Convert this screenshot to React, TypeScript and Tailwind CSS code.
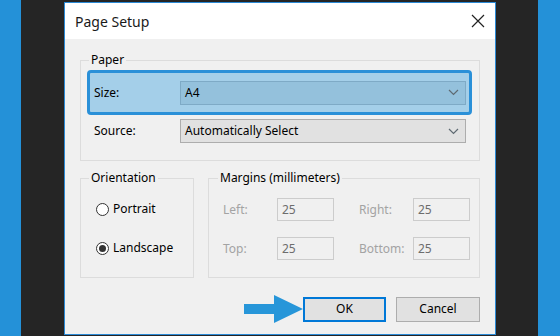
import { useState } from "react";

const font = { fontFamily: '"Noto Sans", "Open Sans", sans-serif' };

function Chevron() {
  return (
    <svg width="11" height="7" viewBox="0 0 11 7" className="mr-[6px]">
      <path d="M1 1l4.5 4.5L10 1" fill="none" stroke="#5f6a72" strokeWidth="1.2" />
    </svg>
  );
}

function Select({ value, highlight }: { value: string; highlight?: boolean }) {
  return (
    <div
      className={
        highlight
          ? "flex h-[24px] w-[286px] items-center justify-between border border-[#7eaac6] bg-[#94c1dc] pl-[4px]"
          : "flex h-[24px] w-[286px] items-center justify-between border border-[#adadad] bg-[#e1e1e1] pl-[4px]"
      }
    >
      <span className="text-[12px] leading-none text-black">{value}</span>
      <Chevron />
    </div>
  );
}

function Radio({ label, checked, onClick }: { label: string; checked: boolean; onClick: () => void }) {
  return (
    <button type="button" onClick={onClick} className="flex h-[16px] items-center gap-[4px] text-[12px] text-black">
      <span className="flex size-[13px] items-center justify-center rounded-full border border-[#333] bg-white">
        {checked ? <span className="size-[7px] rounded-full bg-[#333]" /> : null}
      </span>
      {label}
    </button>
  );
}

function MarginInput({ label, value }: { label: string; value: string }) {
  return (
    <div className="flex items-center">
      <span className="w-[54px] text-[12px] text-[#a3a3a3]">{label}</span>
      <div className="flex h-[23px] w-[57px] items-center border border-[#cccccc] bg-[#f0f0f0] pl-[4px] text-[12px] text-[#6d6d6d]">
        {value}
      </div>
    </div>
  );
}

export default function App() {
  const [landscape, setLandscape] = useState(true);

  return (
    <div className="flex h-[336px] w-[560px] overflow-hidden bg-[#252525]" style={font}>
      <div className="w-[21px] shrink-0 bg-[#2491d8]" />
      <div className="flex-1">
        <div className="ml-[43px] mt-[2px] w-[432px] border border-[#2b8ad6] bg-[#f0f0f0]">
          <div className="flex h-[36px] items-center justify-between bg-white pl-[10px] pr-[10px]">
            <span className="text-[14px] text-[#1a1a1a]">Page Setup</span>
            <svg width="14" height="14" viewBox="0 0 14 14">
              <path d="M1 1l12 12M13 1L1 13" stroke="#222" strokeWidth="1.2" />
            </svg>
          </div>

          <div className="px-[15px] pb-[11px] pt-[13px]">
            <fieldset className="w-[400px] border border-[#dcdcdc] px-[6px] pb-[17px] pt-[2px]">
              <legend className="ml-[2px] px-[2px] text-[12px] leading-[16px] text-black">Paper</legend>
              <div className="flex h-[45px] w-[385px] items-center rounded-[4px] border-[3px] border-[#2a90d8] bg-[#a4cfe9] pl-[4px]">
                <span className="w-[86px] text-[12px] text-black">Size:</span>
                <Select value="A4" highlight />
              </div>
              <div className="mt-[4px] flex items-center pl-[7px]">
                <span className="w-[86px] text-[12px] text-black">Source:</span>
                <Select value="Automatically Select" />
              </div>
            </fieldset>

            <div className="mt-[9px] flex gap-[14px]">
              <fieldset className="w-[114px] border border-[#dcdcdc] pb-[20px] pl-[15px] pt-[15px]">
                <legend className="-ml-[7px] px-[2px] text-[12px] leading-[16px] text-black">Orientation</legend>
                <div className="flex flex-col gap-[23px]">
                  <Radio label="Portrait" checked={!landscape} onClick={() => setLandscape(false)} />
                  <Radio label="Landscape" checked={landscape} onClick={() => setLandscape(true)} />
                </div>
              </fieldset>

              <fieldset className="w-[272px] border border-[#dcdcdc] pb-[17px] pl-[14px] pt-[12px]">
                <legend className="-ml-[5px] px-[2px] text-[12px] leading-[16px] text-black">
                  Margins (millimeters)
                </legend>
                <div className="flex flex-col gap-[16px]">
                  <div className="flex gap-[25px]">
                    <MarginInput label="Left:" value="25" />
                    <MarginInput label="Right:" value="25" />
                  </div>
                  <div className="flex gap-[25px]">
                    <MarginInput label="Top:" value="25" />
                    <MarginInput label="Bottom:" value="25" />
                  </div>
                </div>
              </fieldset>
            </div>

            <div className="mt-[17px] flex items-center justify-end">
              <svg width="59" height="28" viewBox="0 0 59 28">
                <polygon points="0,9 30,9 30,0 59,14 30,28 30,19 0,19" fill="#2796d9" />
              </svg>
              <button type="button" className="h-[25px] w-[83px] border-2 border-[#0078d7] bg-[#e1e1e1] text-[12px] text-black">
                OK
              </button>
              <button type="button" className="ml-[10px] h-[25px] w-[84px] border border-[#adadad] bg-[#e1e1e1] text-[12px] text-black">
                Cancel
              </button>
            </div>
          </div>
        </div>
      </div>
      <div className="w-[22px] shrink-0 bg-[#2491d8]" />
    </div>
  );
}
